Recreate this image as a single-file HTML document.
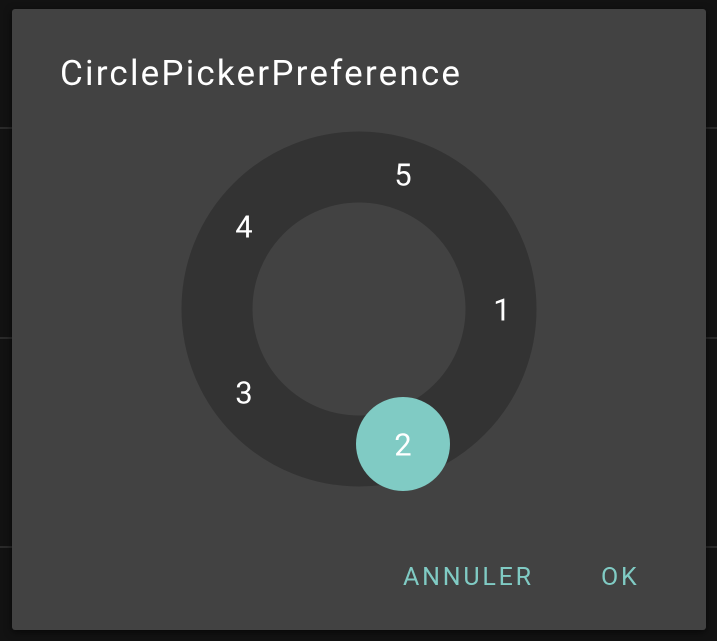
<!DOCTYPE html>
<html><head><style>
body{margin:0;width:717px;height:641px;background:#121212;position:relative;overflow:hidden;font-family:"Roboto","Liberation Sans",sans-serif}
.ln{position:absolute;left:0;width:717px;height:2px;background:#2a2a2a}
.dlg{position:absolute;left:12px;top:9px;width:694px;height:621px;background:#424242;border-radius:3px;box-shadow:0 2px 8px rgba(0,0,0,.6)}
.t{position:absolute;left:48px;top:44px;color:#fff;font-size:35px;letter-spacing:2.2px;white-space:nowrap}
.n{position:absolute;color:#fff;font-size:31px;transform:translate(-50%,-50%)}
.b{position:absolute;color:#80cbc4;font-size:25px;letter-spacing:2.8px;top:554px}
</style></head><body>
<div class="ln" style="top:127px"></div>
<div class="ln" style="top:337px"></div>
<div class="ln" style="top:546px"></div>
<div class="dlg">
<div class="t">CirclePickerPreference</div>
<svg style="position:absolute;left:0;top:0" width="694" height="621">
<circle cx="347" cy="300" r="142" fill="none" stroke="#333333" stroke-width="71"/>
<circle cx="391" cy="435" r="47" fill="#80cbc4"/>
</svg>
<div class="n" style="left:391px;top:166px">5</div>
<div class="n" style="left:232px;top:218px">4</div>
<div class="n" style="left:490px;top:301px">1</div>
<div class="n" style="left:232px;top:384px">3</div>
<div class="n" style="left:391px;top:436px">2</div>
<div class="b" style="left:391px">ANNULER</div>
<div class="b" style="left:589px">OK</div>
</div>
</body></html>
